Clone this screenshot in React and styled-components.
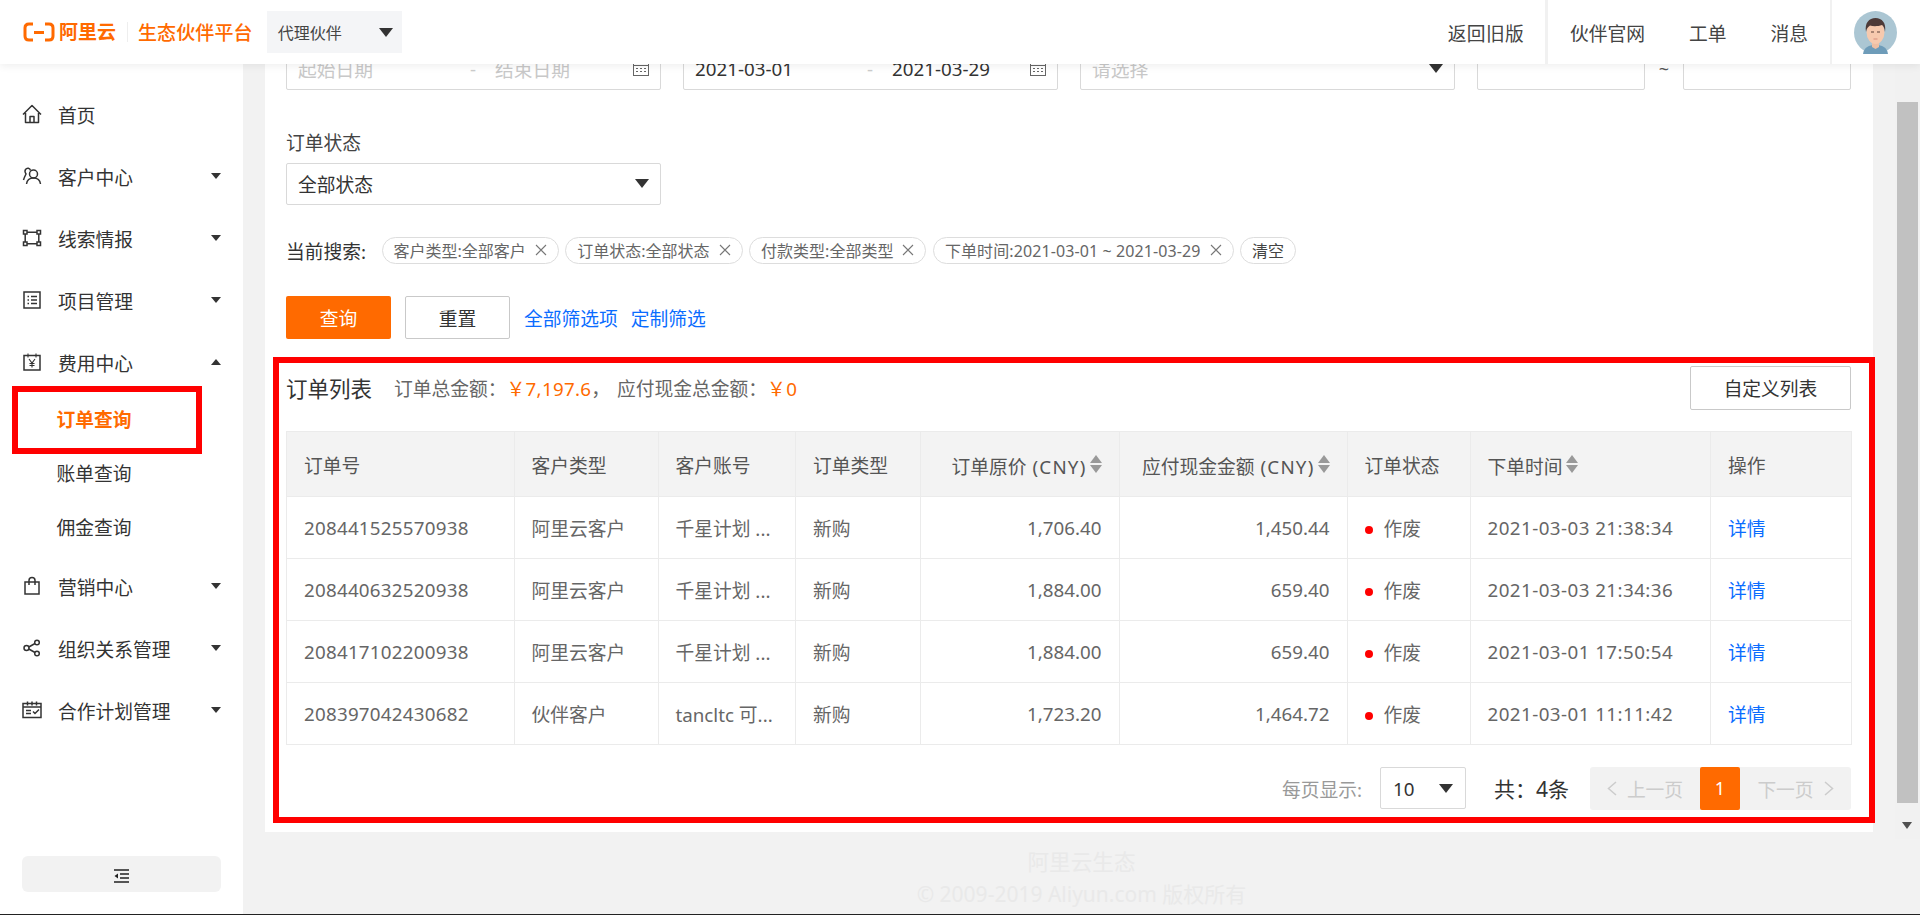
import React from "react";
import styled, { createGlobalStyle } from "styled-components";

const ORANGE = "#ff6a00";
const BLUE = "#0a6cff";

const Global = createGlobalStyle`
  html, body { margin: 0; padding: 0; height: 100%; background: #f2f2f2; overflow: hidden; }
  * { box-sizing: border-box; }
  body { font-family: "Noto Sans", "Noto Sans CJK SC", sans-serif; color: #333; }
`;

const Page = styled.div`
  width: 1920px; height: 915px; display: flex; flex-direction: column;
  background: #f2f2f2; border-bottom: 1px solid #222; overflow: hidden;
`;
const Header = styled.header`
  position: relative; z-index: 5; height: 64px; flex: none; display: flex; align-items: center;
  background: #fff; box-shadow: 0 2px 8px rgba(0,0,0,.07); padding-left: 23px;
`;
const LogoMark = styled.svg`width: 32px; height: 20px; flex: none;`;
const LogoText = styled.span`margin-left: 4px; font-size: 19px; font-weight: 700; color: ${ORANGE}; line-height: 1;`;
const LogoDivider = styled.i`width: 1px; height: 20px; background: #eee; margin: 0 10px 0 11px;`;
const PlatformName = styled.span`font-size: 19px; font-weight: 500; color: ${ORANGE}; letter-spacing: .1px;`;
const RoleSelect = styled.div`
  margin-left: 14px; width: 135px; height: 42px; background: #f4f5f7; display: flex; align-items: center;
  justify-content: space-between; padding: 0 9px 0 11px; font-size: 16px; color: #444;
`;
const Caret = styled.i`
  display: block; flex: none; width: 0; height: 0;
  border-left: ${p => p.$w / 2}px solid transparent; border-right: ${p => p.$w / 2}px solid transparent;
  ${p => p.$up ? "border-bottom" : "border-top"}: ${p => p.$h}px solid ${p => p.$color || "#333"};
`;
const HeaderRight = styled.div`margin-left: auto; height: 100%; display: flex; align-items: center;`;
const HeaderLink = styled.a`padding: 0 ${p => p.$pad || 22}px; font-size: 18.75px; color: #444; white-space: nowrap; letter-spacing: ${p => p.$ls || 0}px;`;
const HeaderDivider = styled.i`width: ${p => p.$w}px; height: 100%; background: #f1f1f1;`;
const AvatarWrap = styled.div`padding: 0 23.5px 0 21.5px; display: flex; align-items: center;`;
const AvatarSvg = styled.svg`width: 43px; height: 43px; display: block;`;

const Body = styled.div`flex: 1; min-height: 0; display: flex;`;
const Sidebar = styled.aside`
  width: 243px; flex: none; background: #fff; display: flex; flex-direction: column; padding-top: 19px;
`;
const NavItem = styled.div`
  height: 62px; display: flex; align-items: center; padding: 0 22px; font-size: 18.75px; color: #333;
`;
const NavIcon = styled.svg`width: 20px; height: 20px; margin-right: 16px; flex: none; fill: none; stroke: #333; stroke-width: 1.5;`;
const NavLabel = styled.span`flex: 1; white-space: nowrap;`;
const NavSub = styled.div`
  position: relative; height: 54px; line-height: 54px; padding-left: 56.5px; font-size: 18.75px;
  color: ${p => p.$active ? ORANGE : "#333"}; font-weight: ${p => p.$active ? 700 : 400};
`;
const NavFrame = styled.div`
  position: absolute; left: 12px; top: -7px; width: 190px; height: 68px; border: 6px solid #f00;
`;
const Collapse = styled.button`
  margin: auto 22px 22px; width: 199px; height: 36px; background: #f2f2f2; border: 0; border-radius: 6px;
  display: flex; align-items: center; justify-content: center; padding: 4px 0 0;
`;
const CollapseIcon = styled.svg`width: 15px; height: 14px;`;

const Main = styled.main`flex: 1; min-width: 0; padding: 0 22px; display: flex; flex-direction: column;`;
const Card = styled.section`background: #fff; height: 768px; padding: 0 22px 0 21px; flex: none;`;
const InputRow = styled.div`display: flex; margin-top: -16.5px; gap: 22px; align-items: center;`;
const Box = styled.div`
  position: relative; width: ${p => p.$w}px; height: 42px; flex: none; border: 1px solid #d9d9d9; border-radius: 2px; background: #fff;
  display: flex; align-items: center; padding: 0 11px; font-size: 18.75px; color: ${p => p.$muted ? "#c8c8c8" : "#333"};
  justify-content: ${p => p.$between ? "space-between" : "flex-start"};
`;
const DatePart = styled.span`width: 165px; white-space: nowrap; flex: none;`;
const DateEnd = styled.span`flex: 1; white-space: nowrap;`;
const DateSep = styled.span`width: 20px; margin-right: 12px; text-align: center; flex: none; color: #ccc;`;
const CalIcon = styled.svg`width: 16px; height: 14px; flex: none; fill: none; stroke: #666; stroke-width: 1;`;
const RangeRow = styled.div`display: flex; align-items: center;`;
const Tilde = styled.span`width: 38px; text-align: center; font-size: 18px; color: #555;`;
const FieldLabel = styled.div`margin-top: 39.5px; height: 28px; line-height: 28px; font-size: 18.75px; color: #444;`;
const StatusBox = styled(Box)`margin-top: 6px; padding-bottom: 2px;`;
const TagRow = styled.div`margin-top: 32px; display: flex; align-items: center; height: 26.5px; gap: 6.5px;`;
const TagLabel = styled.span`width: 89px; font-size: 18.75px; color: #333; white-space: nowrap;`;
const Tag = styled.span`
  height: 26.5px; border: 1px solid #ddd; border-radius: 14px; display: inline-flex; align-items: center;
  padding: 0 11px; font-size: 16px; color: #666; white-space: nowrap; gap: 9px; letter-spacing: ${p => p.$ls || 0}px;
`;
const ClearTag = styled(Tag)`color: #444;`;
const CloseIcon = styled.svg`width: 12px; height: 12px; flex: none; stroke: #777; stroke-width: 1.1; fill: none;`;
const ButtonRow = styled.div`margin-top: 32.5px; display: flex; align-items: center;`;
const PrimaryBtn = styled.button`
  width: 105px; height: 42.5px; border: 0; border-radius: 2px; background: ${ORANGE}; color: #fff;
  font: 400 18.75px "Noto Sans", "Noto Sans CJK SC", sans-serif;
`;
const GhostBtn = styled.button`
  width: ${p => p.$w}px; height: ${p => p.$h}px; border: 1px solid #c9c9c9; border-radius: 2px; background: #fff; color: #333;
  font: 400 18.75px "Noto Sans", "Noto Sans CJK SC", sans-serif; margin-left: ${p => p.$ml || 0}px;
`;
const LinkText = styled.a`margin-left: ${p => p.$ml}px; font-size: 18.75px; color: ${BLUE}; white-space: nowrap;`;

const ListSection = styled.div`position: relative; margin-top: 27px;`;
const BigFrame = styled.div`
  position: absolute; left: -13px; right: -24px; top: -9px; bottom: -13px; border: 6px solid #f00; pointer-events: none;
`;
const ListHead = styled.div`display: flex; align-items: center; height: 44px;`;
const ListTitle = styled.span`font-size: 21.5px; color: #333; white-space: nowrap;`;
const Summary = styled.span`margin-left: ${p => p.$ml}px; font-size: 18.75px; color: #666; white-space: nowrap;`;
const Amount = styled.b`font-weight: 400; color: ${ORANGE}; letter-spacing: .3px;`;
const CustomBtnWrap = styled.div`margin-left: auto;`;

const Table = styled.table`
  margin-top: 21px; width: 1565px; table-layout: fixed; border-collapse: collapse; font-size: 18.75px;
`;
const Col = styled.col`width: ${p => p.$w}px;`;
const Th = styled.th`
  height: 65.5px; background: #f3f3f3; border: 1px solid #ebebeb; font-weight: 400; color: #555;
  padding: 2px 17px 0; text-align: ${p => p.$right ? "right" : "left"}; white-space: nowrap;
`;
const Td = styled.td`
  height: 62px; border: 1px solid #ebebeb; color: #666; padding: 0 17px; white-space: nowrap; overflow: hidden;
  text-align: ${p => p.$right ? "right" : "left"}; letter-spacing: ${p => p.$ls || 0}px;
`;
const SortWrap = styled.span`
  display: inline-flex; align-items: center; gap: 3px; vertical-align: middle;
`;
const Unit = styled.span`letter-spacing: 1.2px; margin-left: 6px;`;
const SortIcon = styled.span`display: inline-flex; flex-direction: column; gap: 2px; flex: none; margin-top: -3px;`;
const Dot = styled.i`display: inline-block; width: 8px; height: 8px; border-radius: 50%; background: #f00; margin-right: 11px; vertical-align: 2px;`;
const DetailLink = styled.a`color: ${BLUE};`;

const PagerRow = styled.div`margin-top: 21.5px; display: flex; justify-content: flex-end; align-items: center; height: 43px;`;
const PageSizeLabel = styled.span`font-size: 18.75px; color: #999; white-space: nowrap;`;
const PageSize = styled(Box)`margin-left: 18px; justify-content: space-between; padding: 0 12px; height: 42px;`;
const Total = styled.span`margin-left: 28px; font-size: 21px; color: #333; white-space: nowrap;`;
const Pager = styled.div`
  margin-left: 21px; width: 261px; height: 43px; background: #f2f2f2; border-radius: 3px; display: flex; align-items: center; font-size: 18.75px; color: #ccc;
`;
const PagerPrev = styled.span`
  width: 110px; flex: none; display: flex; align-items: center; justify-content: center; gap: 10px; white-space: nowrap;
`;
const PagerNext = styled(PagerPrev)`width: 111px;`;
const PagerChevron = styled.svg`width: 10px; height: 15px; fill: none; stroke: #ccc; stroke-width: 1.5;`;
const PageCurrent = styled.span`
  width: 40px; height: 43px; flex: none; background: ${ORANGE}; border-radius: 2px; color: #fff; display: flex; align-items: center; justify-content: center; font-size: 18px;
`;

const Footer = styled.footer`
  padding: 13px 0 0 25px; text-align: center; color: #e9e9e9; font-size: 21px; line-height: 33px;
`;
const FooterBrand = styled.div`font-size: 21.6px;`;
const Scrollbar = styled.div`
  width: 25px; height: 775px; flex: none; background: #f1f1f1; padding: 38px 2px 0 1.5px; display: flex; flex-direction: column; align-items: center;
`;
const Thumb = styled.div`width: 100%; height: 701px; background: #c1c1c1;`;
const ScrollArrow = styled.div`margin-top: 19px;`;

function Chevrons() {
  return (
    <SortIcon>
      <Caret $up $w={13} $h={8} $color="#999" />
      <Caret $w={13} $h={8} $color="#999" />
    </SortIcon>
  );
}
const X = () => <CloseIcon viewBox="0 0 12 12"><path d="M1 1l10 10M11 1L1 11" /></CloseIcon>;
const Cal = () => (
  <CalIcon viewBox="0 0 16 14">
    <rect x=".5" y=".5" width="15" height="13" />
    <path d="M.5 3.5h15M3 6.5h2M7 6.5h2M11 6.5h2M3 9.5h2M7 9.5h2M11 9.5h2" />
  </CalIcon>
);

const icons = {
  home: <path d="M1 10.500 10 1.500l9 9M3.500 9v9.500h13V9M8 18.500v-6h4v6" strokeLinejoin="round" />,
  user: <><circle cx="11.500" cy="8" r="4" /><path d="M4.500 18c.5-4 3-6 7-6s6.500 2 7 6M8.500 4.500C8 2 5 1.500 3.500 3.500c-1 1.500-.5 3 .5 4.500C3 10 2 12 1.500 14" /></>,
  nodes: <><rect x="1.500" y="2.500" width="3.500" height="3.500" /><rect x="15" y="2.500" width="3.500" height="3.500" /><rect x="1.500" y="14" width="3.500" height="3.500" /><rect x="15" y="14" width="3.500" height="3.500" /><path d="M5 4.200h10M5 15.800h10M3.200 6v8M16.800 6v8" /></>,
  list: <><rect x="2" y="2" width="16" height="16" /><path d="M5.500 6.500h1.500M5.500 10h1.500M5.500 13.500h1.500M9 6.500h6M9 10h6M9 13.500h6" /></>,
  yen: <><rect x="2" y="3.500" width="16" height="14.500" /><path d="M6 1.500v4M14 1.500v4M7 7l3 4 3-4M10 11v4.500M7.500 11.500h5M7.500 13.500h5" strokeWidth="1.100" /></>,
  bag: <><rect x="3" y="6" width="14" height="12" /><path d="M7 9V4.500a3 3 0 0 1 6 0V9" /></>,
  share: <><circle cx="4.500" cy="10" r="2.500" /><circle cx="15" cy="4.500" r="2.300" /><circle cx="15" cy="15.500" r="2.300" /><path d="M6.800 9 13 5.500M6.800 11 13 14.500" /></>,
  plan: <><rect x="1" y="3.500" width="18" height="14" /><path d="M1 7h18M5.500 1.500v4M10 1.500v4M14.500 1.500v4M4 10.500h5M4 13.500h5M11 11.500l2 2 4-4" /></>,
};

const nav = (label, icon, open) => (
  <NavItem>
    <NavIcon viewBox="0 0 20 20">{icons[icon]}</NavIcon>
    <NavLabel>{label}</NavLabel>
    {open === undefined ? null : <Caret $w={10} $h={6} $up={open} />}
  </NavItem>
);

const rows = [
  ["208441525570938", "阿里云客户", "千星计划 ...", "1,706.40", "1,450.44", "2021-03-03 21:38:34"],
  ["208440632520938", "阿里云客户", "千星计划 ...", "1,884.00", "659.40", "2021-03-03 21:34:36"],
  ["208417102200938", "阿里云客户", "千星计划 ...", "1,884.00", "659.40", "2021-03-01 17:50:54"],
  ["208397042430682", "伙伴客户", "tancltc 可...", "1,723.20", "1,464.72", "2021-03-01 11:11:42"],
];
const widths = [227.5, 144, 137.5, 124.5, 199, 228, 123, 240.5, 141];

export default function App() {
  return (
    <Page>
      <Global />
      <Header>
        <LogoMark viewBox="0 0 32 20" fill="none" stroke={ORANGE} strokeWidth="3">
          <path d="M10 2H6Q2 2 2 6v8q0 4 4 4h4M22 2h4q4 0 4 4v8q0 4-4 4h-4M11 10.500h10" />
        </LogoMark>
        <LogoText>阿里云</LogoText>
        <LogoDivider />
        <PlatformName>生态伙伴平台</PlatformName>
        <RoleSelect>代理伙伴<Caret $w={15} $h={9} /></RoleSelect>
        <HeaderRight>
          <HeaderLink $pad={21} $ls={.3}>返回旧版</HeaderLink>
          <HeaderDivider $w={3} />
          <HeaderLink>伙伴官网</HeaderLink>
          <HeaderLink>工单</HeaderLink>
          <HeaderLink>消息</HeaderLink>
          <HeaderDivider $w={2} />
          <AvatarWrap>
            <AvatarSvg viewBox="0 0 43 43">
              <circle cx="21.500" cy="21.500" r="21.500" fill="#abc6d3" />
              <path d="M9 43c1-7 6-9 12.500-9S33 36 34 43z" fill="#6e9cb9" />
              <path d="M18 31h7v5l-3.500 2-3.500-2z" fill="#eebfa4" />
              <ellipse cx="21.500" cy="21" rx="9" ry="12" fill="#f6c9ae" />
              <path d="M12 21c-1.500-9 3-14 9.500-14S32.500 12 31 21c-.5-4-1.500-6-3-7-4 1.500-9 1.500-12 .5-2 1.500-3.500 3-4 6.500z" fill="#4d3a38" />
              <path d="M17 21h3M23 21h3" stroke="#5a4038" strokeWidth="1" />
              <path d="M19.500 28h4" stroke="#d58f7c" strokeWidth="1" />
            </AvatarSvg>
          </AvatarWrap>
        </HeaderRight>
      </Header>
      <Body>
        <Sidebar>
          {nav("首页", "home")}
          {nav("客户中心", "user", false)}
          {nav("线索情报", "nodes", false)}
          {nav("项目管理", "list", false)}
          {nav("费用中心", "yen", true)}
          <NavSub $active>订单查询<NavFrame /></NavSub>
          <NavSub>账单查询</NavSub>
          <NavSub>佣金查询</NavSub>
          {nav("营销中心", "bag", false)}
          {nav("组织关系管理", "share", false)}
          {nav("合作计划管理", "plan", false)}
          <Collapse>
            <CollapseIcon viewBox="0 0 15 14" fill="none" stroke="#222" strokeWidth="1.300">
              <path d="M0 1h15M6 5h9M6 9h9M0 13h15" />
              <path d="M4 4.500v5L.5 7z" fill="#222" stroke="none" />
            </CollapseIcon>
          </Collapse>
        </Sidebar>
        <Main>
          <Card>
            <InputRow>
              <Box $w={375} $muted>
                <DatePart>起始日期</DatePart><DateSep>-</DateSep><DateEnd>结束日期</DateEnd><Cal />
              </Box>
              <Box $w={375}>
                <DatePart>2021-03-01</DatePart><DateSep>-</DateSep><DateEnd>2021-03-29</DateEnd><Cal />
              </Box>
              <Box $w={375} $muted $between>请选择<Caret $w={15} $h={9} /></Box>
              <RangeRow>
                <Box $w={168} />
                <Tilde>~</Tilde>
                <Box $w={168} />
              </RangeRow>
            </InputRow>
            <FieldLabel>订单状态</FieldLabel>
            <StatusBox $w={375} $between>全部状态<Caret $w={15} $h={9} /></StatusBox>
            <TagRow>
              <TagLabel>当前搜索:</TagLabel>
              <Tag>客户类型:全部客户<X /></Tag>
              <Tag>订单状态:全部状态<X /></Tag>
              <Tag>付款类型:全部类型<X /></Tag>
              <Tag $ls={.1}>下单时间:2021-03-01 ~ 2021-03-29<X /></Tag>
              <ClearTag>清空</ClearTag>
            </TagRow>
            <ButtonRow>
              <PrimaryBtn>查询</PrimaryBtn>
              <GhostBtn $w={105} $h={42.5} $ml={14}>重置</GhostBtn>
              <LinkText $ml={14}>全部筛选项</LinkText>
              <LinkText $ml={13}>定制筛选</LinkText>
            </ButtonRow>
            <ListSection>
              <BigFrame />
              <ListHead>
                <ListTitle>订单列表</ListTitle>
                <Summary $ml={22}>订单总金额：<Amount>￥7,197.6</Amount>，</Summary>
                <Summary $ml={7}>应付现金总金额：<Amount>￥0</Amount></Summary>
                <CustomBtnWrap><GhostBtn $w={161} $h={44}>自定义列表</GhostBtn></CustomBtnWrap>
              </ListHead>
              <Table>
                <colgroup>{widths.map((w, i) => <Col key={i} $w={w} />)}</colgroup>
                <thead>
                  <tr>
                    <Th>订单号</Th>
                    <Th>客户类型</Th>
                    <Th>客户账号</Th>
                    <Th>订单类型</Th>
                    <Th $right><SortWrap><span>订单原价<Unit>(CNY)</Unit></span><Chevrons /></SortWrap></Th>
                    <Th $right><SortWrap><span>应付现金金额<Unit>(CNY)</Unit></span><Chevrons /></SortWrap></Th>
                    <Th>订单状态</Th>
                    <Th><SortWrap>下单时间<Chevrons /></SortWrap></Th>
                    <Th>操作</Th>
                  </tr>
                </thead>
                <tbody>
                  {rows.map(r => (
                    <tr key={r[0]}>
                      <Td $ls={.25}>{r[0]}</Td>
                      <Td>{r[1]}</Td>
                      <Td>{r[2]}</Td>
                      <Td>新购</Td>
                      <Td $right>{r[3]}</Td>
                      <Td $right>{r[4]}</Td>
                      <Td><Dot />作废</Td>
                      <Td $ls={.45}>{r[5]}</Td>
                      <Td><DetailLink>详情</DetailLink></Td>
                    </tr>
                  ))}
                </tbody>
              </Table>
              <PagerRow>
                <PageSizeLabel>每页显示:</PageSizeLabel>
                <PageSize $w={86}>10<Caret $w={15} $h={9} /></PageSize>
                <Total>共：4条</Total>
                <Pager>
                  <PagerPrev>
                    <PagerChevron viewBox="0 0 10 15"><path d="M9 1 1.500 7.500 9 14" /></PagerChevron>上一页
                  </PagerPrev>
                  <PageCurrent>1</PageCurrent>
                  <PagerNext>
                    下一页<PagerChevron viewBox="0 0 10 15"><path d="M1 1l7.500 6.500L1 14" /></PagerChevron>
                  </PagerNext>
                </Pager>
              </PagerRow>
            </ListSection>
          </Card>
          <Footer>
            <FooterBrand>阿里云生态</FooterBrand>
            <div>© 2009-2019 Aliyun.com 版权所有</div>
          </Footer>
        </Main>
        <Scrollbar>
          <Thumb />
          <ScrollArrow><Caret $w={11} $h={7} $color="#505050" /></ScrollArrow>
        </Scrollbar>
      </Body>
    </Page>
  );
}
